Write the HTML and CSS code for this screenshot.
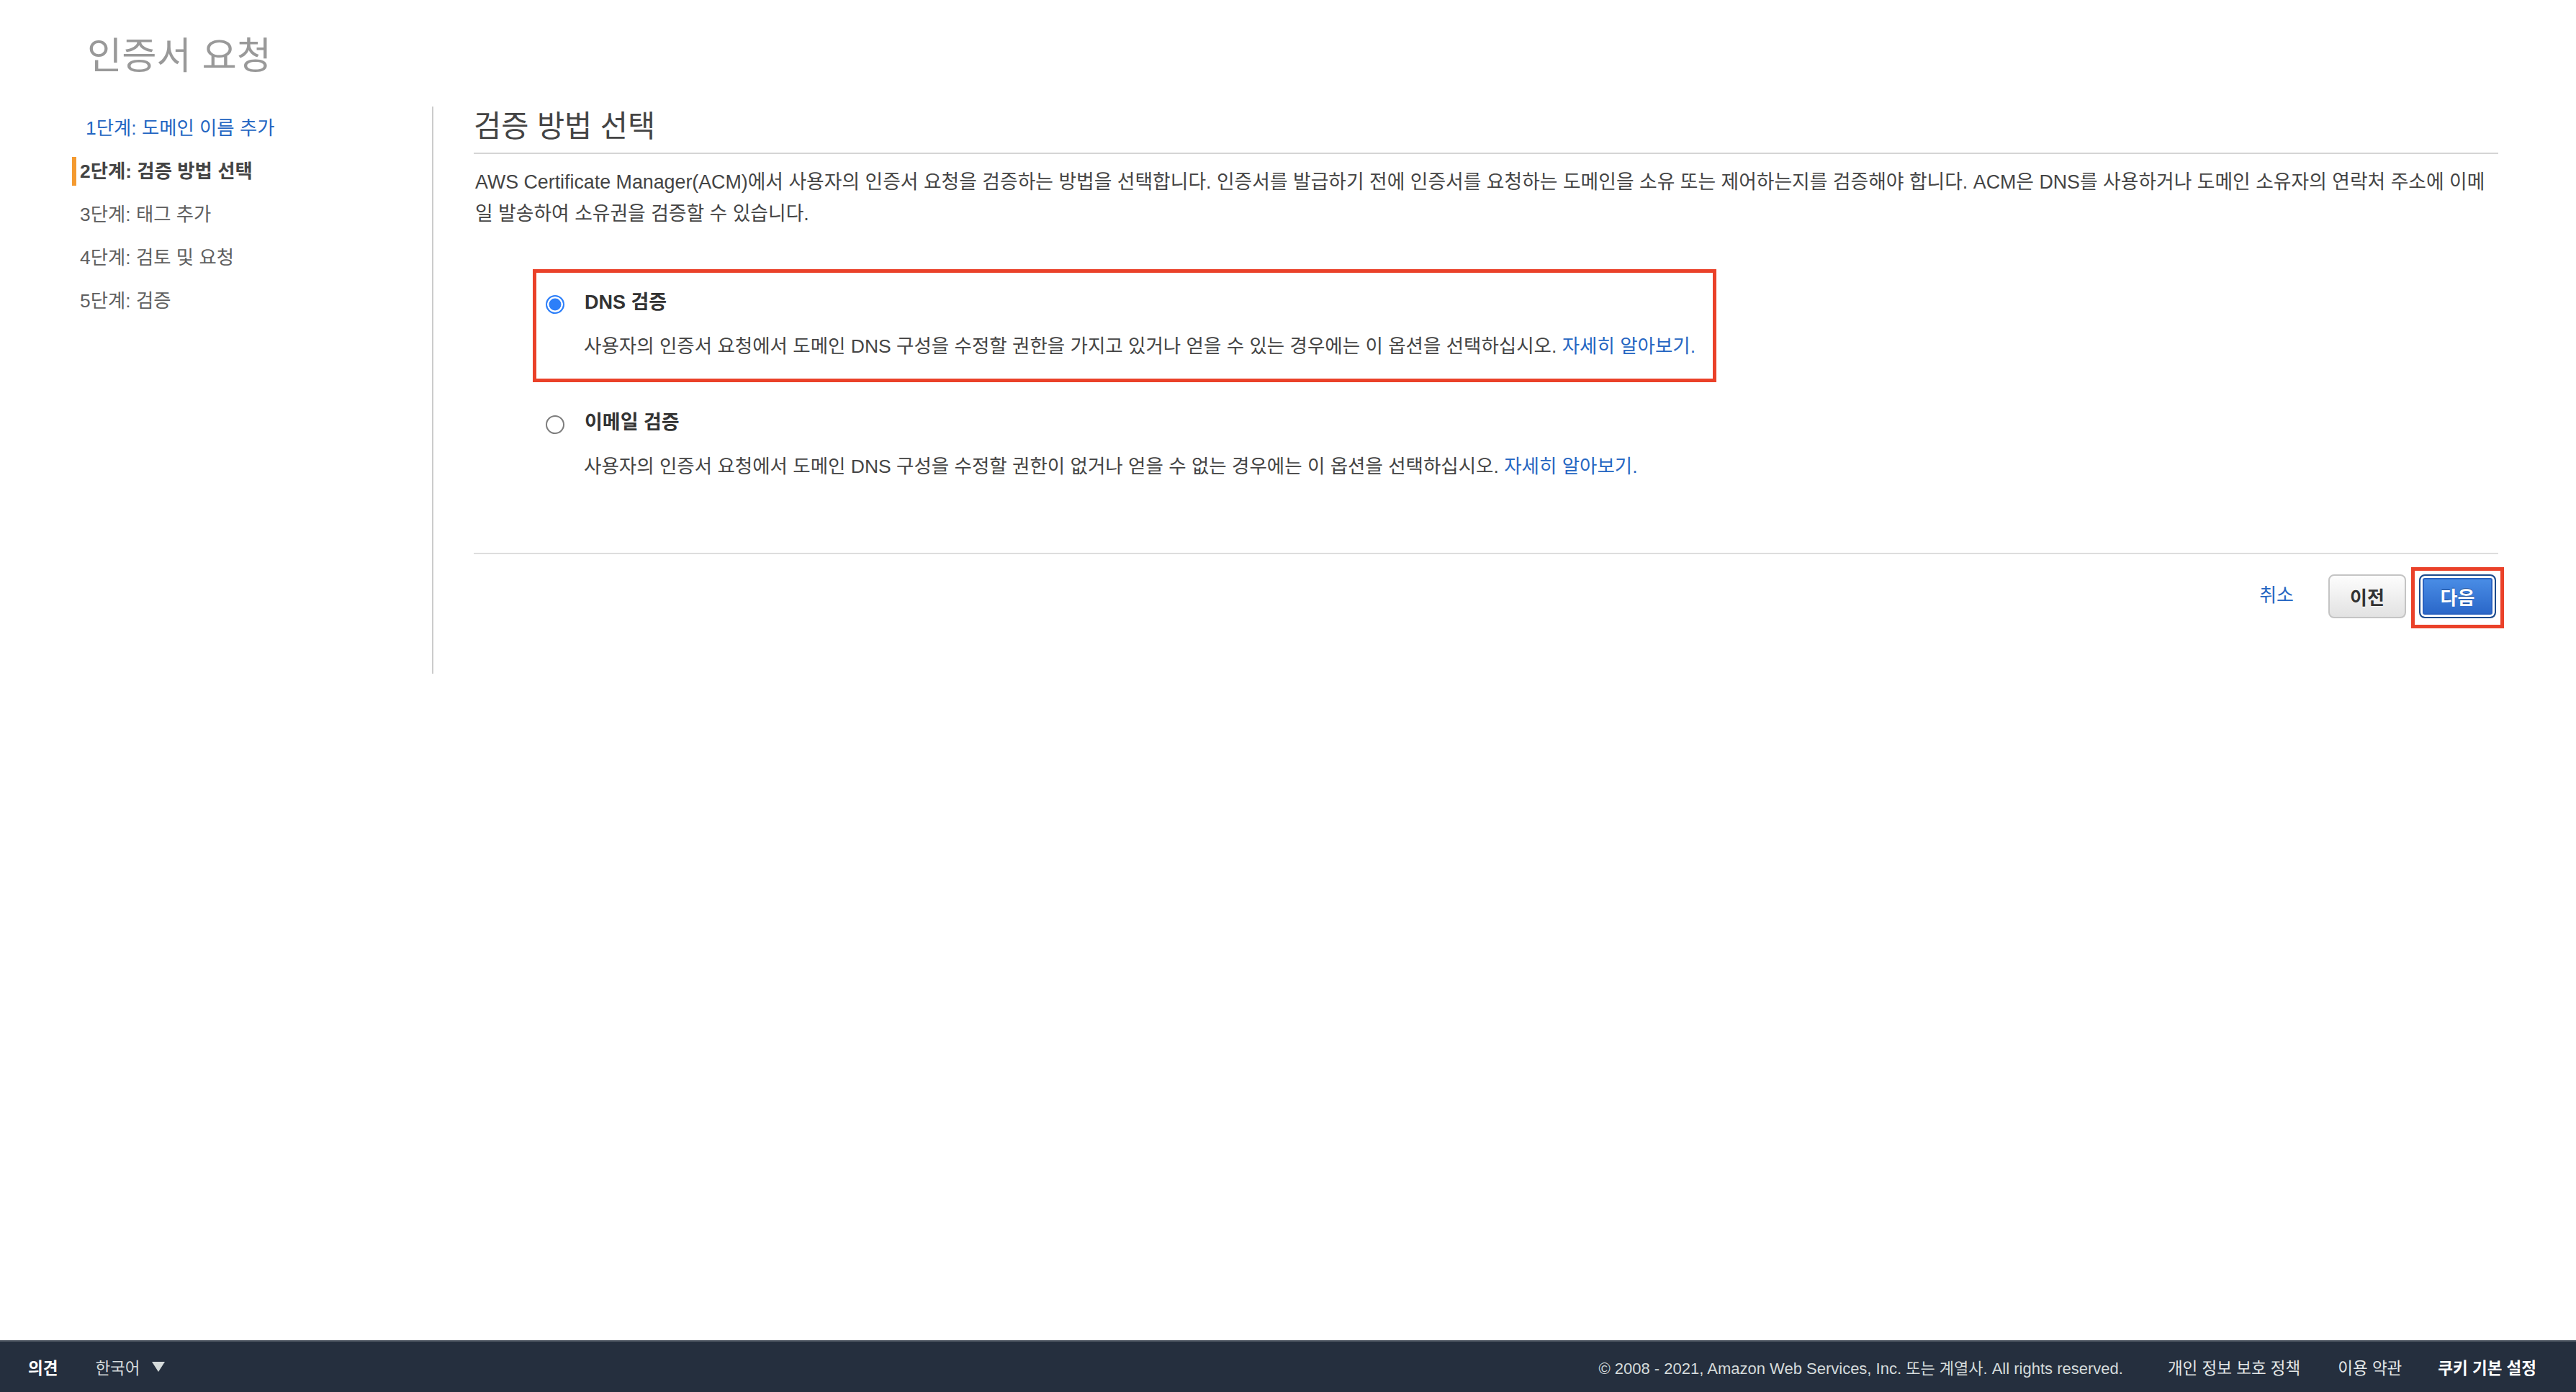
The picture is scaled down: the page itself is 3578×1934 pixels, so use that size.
FILE: index.html
```html
<!DOCTYPE html>
<html lang="ko">
<head>
<meta charset="utf-8">
<title>인증서 요청</title>
<link rel="stylesheet" href="styles.css">
</head>
<body>
<div class="page">
  <h1 class="page-title">인증서 요청</h1>
  <div class="wizard">
    <ul class="steps">
      <li class="step step-link"><a href="#">1단계: 도메인 이름 추가</a></li>
      <li class="step step-current">2단계: 검증 방법 선택</li>
      <li class="step">3단계: 태그 추가</li>
      <li class="step">4단계: 검토 및 요청</li>
      <li class="step">5단계: 검증</li>
    </ul>
    <section class="panel">
      <h2 class="panel-heading">검증 방법 선택</h2>
      <p class="intro">AWS Certificate Manager(ACM)에서 사용자의 인증서 요청을 검증하는 방법을 선택합니다. 인증서를 발급하기 전에 인증서를 요청하는 도메인을 소유 또는 제어하는지를 검증해야 합니다. ACM은 DNS를 사용하거나 도메인 소유자의 연락처 주소에 이메일 발송하여 소유권을 검증할 수 있습니다.</p>
      <div class="options">
        <div class="option option-selected">
          <div class="option-head"><span class="radio radio-on"></span><span class="option-title">DNS 검증</span></div>
          <p class="option-desc">사용자의 인증서 요청에서 도메인 DNS 구성을 수정할 권한을 가지고 있거나 얻을 수 있는 경우에는 이 옵션을 선택하십시오. <a href="#" class="link">자세히 알아보기.</a></p>
        </div>
        <div class="option">
          <div class="option-head"><span class="radio radio-off"></span><span class="option-title">이메일 검증</span></div>
          <p class="option-desc">사용자의 인증서 요청에서 도메인 DNS 구성을 수정할 권한이 없거나 얻을 수 없는 경우에는 이 옵션을 선택하십시오. <a href="#" class="link">자세히 알아보기.</a></p>
        </div>
      </div>
      <div class="actions">
        <a href="#" class="cancel">취소</a>
        <button class="btn btn-prev" type="button">이전</button>
        <span class="highlight"><button class="btn btn-next" type="button">다음</button></span>
      </div>
    </section>
  </div>
</div>
<footer class="footer">
  <span class="footer-feedback">의견</span>
  <span class="footer-lang">한국어<span class="caret"></span></span>
  <div class="footer-right">
    <span class="copyright">© 2008 - 2021, Amazon Web Services, Inc. 또는 계열사. All rights reserved.</span>
    <a href="#" class="footer-link">개인 정보 보호 정책</a>
    <a href="#" class="footer-link">이용 약관</a>
    <a href="#" class="footer-link footer-cookie">쿠키 기본 설정</a>
  </div>
</footer>
</body>
</html>
```
FILE: styles.css
```css
* { box-sizing: border-box; }
html, body { margin: 0; padding: 0; }
body {
  font-family: "Liberation Sans", "Noto Sans CJK KR", sans-serif;
  color: #444;
  background: #fff;
  min-height: 100vh;
  display: flex;
  flex-direction: column;
}
a { text-decoration: none; }

.page { flex: 1; padding: 50px 108px 0 100px; }
.page-title {
  margin: 0 0 0 21px;
  font-size: 52.5px;
  line-height: 56px;
  font-weight: 400;
  color: #999;
}

.wizard { display: flex; margin-top: 42px; }

.steps {
  width: 502px;
  flex: none;
  list-style: none;
  margin: 0;
  padding: 10px 0 0 0;
  border-right: 2px solid #cccccc;
}
.step {
  font-size: 26.4px;
  line-height: 40px;
  margin-bottom: 20px;
  border-left: 6px solid transparent;
  padding-left: 5px;
  color: #5f5f5f;
}
.step-link { padding-left: 13px; }
.step-link a { color: #2566c2; }
.step-current { border-left-color: #f49a30; font-weight: 700; color: #444; }

.panel { flex: 1; padding: 2px 0 63px 56px; }
.panel-heading {
  margin: 0;
  font-size: 41.5px;
  line-height: 52px;
  font-weight: 400;
  color: #444;
  padding-bottom: 10px;
  border-bottom: 2px solid #d5d5d5;
}
.intro {
  margin: 17px 0 0 0;
  padding: 0 12px 0 2px;
  font-size: 26.8px;
  line-height: 44px;
  color: #444;
}

.options {
  margin: 55px 0 0 82px;
  display: flex;
  flex-direction: column;
  align-items: flex-start;
  gap: 10px;
}
.option {
  border: 5px solid transparent;
  padding: 21px 24px 25px 13px;
}
.option-selected { border-color: #ea4129; }
.option-head { display: flex; align-items: flex-start; }
.radio {
  flex: none;
  width: 26px;
  height: 26px;
  border-radius: 50%;
  margin: 10px 28px 0 0;
}
.radio-on {
  background: #2d7ff9;
  border: 2px solid #2d7ff9;
  box-shadow: inset 0 0 0 2.5px #fff;
}
.radio-off { background: #fff; border: 2px solid #7d7d7d; }
.option-title {
  font-size: 27px;
  line-height: 40px;
  font-weight: 700;
  color: #333;
}
.option-desc {
  margin: 21px 0 0 53px;
  font-size: 26.5px;
  line-height: 40px;
  color: #444;
}
.link { color: #2566c2; }

.actions {
  margin-top: 70px;
  border-top: 2px solid #dddddd;
  padding-top: 18px;
  display: flex;
  justify-content: flex-end;
  align-items: flex-start;
}
.actions > .highlight { margin-right: -8px; }
.cancel {
  margin: 19px 48px 0 0;
  font-size: 26px;
  line-height: 40px;
  color: #2566c2;
}
.btn {
  height: 61px;
  border-radius: 8px;
  font-family: "Liberation Sans", "Noto Sans CJK KR", sans-serif;
  font-size: 26px;
  font-weight: 700;
  padding: 0;
  cursor: pointer;
}
.btn-prev {
  width: 108px;
  margin: 10px 7px 0 0;
  border: 2px solid #c4c4c4;
  background: linear-gradient(#fdfdfd, #e2e2e2);
  color: #333;
  text-shadow: 0 1px 0 #fff;
}
.highlight {
  display: block;
  border: 5px solid #ea4129;
  padding: 5px 6px 9px 6px;
}
.btn-next {
  display: block;
  width: 107px;
  border: 2px solid #1b4a8c;
  background: linear-gradient(#4c90e8, #2864c6);
  color: #fff;
  text-shadow: 0 -1px 0 #1c4c94;
  box-shadow: inset 0 0 0 3px #fff, inset 0 0 0 5px #2a62c0;
}

.footer {
  flex: none;
  height: 72px;
  background: #252f3e;
  border-top: 2px solid #525a65;
  display: flex;
  align-items: center;
  padding: 0 55px 0 39px;
  font-size: 22.5px;
  color: #d5dbdb;
}
.footer-feedback { font-weight: 700; color: #fff; margin-right: 52px; }
.footer-lang { display: flex; align-items: center; }
.caret {
  width: 0;
  height: 0;
  border-left: 9px solid transparent;
  border-right: 9px solid transparent;
  border-top: 14px solid #d5dbdb;
  margin-left: 16px;
}
.footer-right { margin-left: auto; display: flex; align-items: center; }
.copyright { margin-right: 62px; font-size: 22px; }
.footer-link { color: #e4e8e8; margin-left: 52px; }
.copyright + .footer-link { margin-left: 0; }
.footer-cookie { font-weight: 700; color: #fff; margin-left: 50px; }
```
